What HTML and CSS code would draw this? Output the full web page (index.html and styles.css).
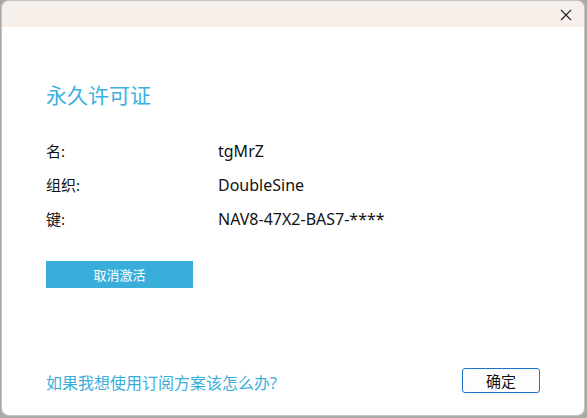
FILE: index.html
```html
<!DOCTYPE html>
<html lang="zh-CN">
<head>
  <meta charset="UTF-8" />
  <title>永久许可证</title>
  <link rel="stylesheet" href="styles.css">
</head>
<body>
  <div class="backdrop">
    <span class="strip s1"></span>
    <span class="strip s2"></span>
    <span class="strip s3"></span>
  </div>

  <div class="dialog">
    <div class="titlebar">
      <svg class="close" width="12" height="12" viewBox="0 0 12 12">
        <path d="M1 1 L11 11 M11 1 L1 11" stroke="#222" stroke-width="1.1" fill="none"/>
      </svg>
    </div>

    <div class="content">
      <h1 class="heading">永久许可证</h1>

      <div class="info">
        <div class="row"><span class="label">名:</span><span class="value">tgMrZ</span></div>
        <div class="row"><span class="label">组织:</span><span class="value">DoubleSine</span></div>
        <div class="row"><span class="label">键:</span><span class="value">NAV8-47X2-BAS7-****</span></div>
      </div>

      <button class="deactivate">取消激活</button>

      <div class="footer">
        <a class="help-link">如果我想使用订阅方案该怎么办?</a>
        <button class="ok-btn">确定</button>
      </div>
    </div>
  </div>
</body>
</html>
```

FILE: styles.css
```css
html, body {
  margin: 0;
  padding: 0;
  height: 100%;
}
body {
  background-color: #a9a9a9;
  font-family: "Noto Sans", "Noto Sans CJK SC", sans-serif;
  padding: 1px 3px 3px 2px;
  box-sizing: border-box;
  overflow: hidden;
}
.backdrop {
  position: absolute;
  top: 0;
  left: 0;
  right: 0;
  height: 2px;
}
.strip {
  position: absolute;
  top: 0;
  height: 2px;
  background-color: #c9a233;
}
.s1 { left: 208px; width: 30px; }
.s2 { left: 247px; width: 19px; }
.s3 { left: 290px; width: 26px; }
.dialog {
  position: relative;
  height: 100%;
  background: white;
  border-radius: 7px;
  overflow: hidden;
  display: flex;
  flex-direction: column;
  box-shadow: 0 0 0 1px #c4c4c4;
}
.titlebar {
  height: 26px;
  background-color: #f7f0ea;
  display: flex;
  justify-content: flex-end;
  align-items: center;
  padding-right: 12px;
}
.close {
  margin-top: 2px;
}
.content {
  flex: 1;
  display: flex;
  flex-direction: column;
  padding: 53px 44px 21px 44px;
}
.heading {
  margin: 0;
  font-size: 21px;
  font-weight: normal;
  color: #3cb0de;
  line-height: 30px;
}
.info {
  margin-top: 31px;
}
.row {
  display: flex;
  align-items: baseline;
  font-size: 15px;
  line-height: 20px;
  color: #111;
  margin-bottom: 14px;
}
.label {
  width: 172px;
}
.value {
  font-size: 16px;
}
.deactivate {
  margin-top: 18px;
  width: 147px;
  height: 27px;
  border: none;
  background-color: #3aaedb;
  color: white;
  font-family: inherit;
  font-size: 13px;
  padding: 0;
}
.footer {
  margin-top: auto;
  display: flex;
  justify-content: space-between;
  align-items: center;
}
.help-link {
  color: #3aaedb;
  font-size: 16px;
  margin-top: 3px;
}
.ok-btn {
  width: 78px;
  height: 25px;
  border: 1px solid #1a74c8;
  border-radius: 3px;
  background-color: #fdfdfd;
  font-family: inherit;
  font-size: 15px;
  color: #111;
  padding: 0;
}
```
